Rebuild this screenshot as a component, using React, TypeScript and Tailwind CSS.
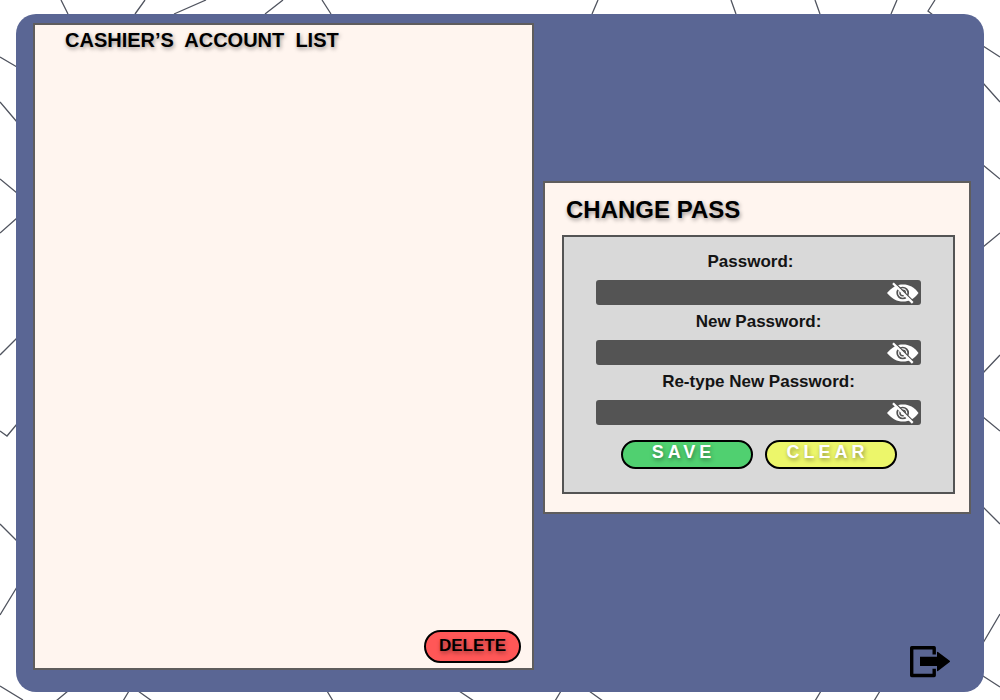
import { useState, type FormEvent } from "react";

const BACKDROP_LINES = [
  "M61 0 68 14M145 0 135 14M206 0 174 14M283 0 265 14M322 0 331 14",
  "M598 0 592 14M731 0 736 14M815 0 820 14M897 0 891 14M935 0 928 11 933 15",
  "M0 57 17 67M0 102 17 122M0 179 17 193M0 233 17 218M0 355 17 338",
  "M0 431 7 436 17 424M0 524 17 541M0 615 17 587M0 686 23 700",
  "M983 46 1000 57M983 83 1000 102M983 165 1000 179M983 247 1000 233M983 373 1000 355",
  "M983 417 1000 431M983 507 1000 524M983 643 1000 614M983 676 1000 687",
  "M68 691 56 701M129 691 123 701M138 691 152 701M327 691 333 701M459 691 474 701",
  "M561 691 555 701M589 691 603 701M821 691 815 701M880 691 874 701",
].join("");

function Backdrop() {
  return (
    <svg
      className="absolute inset-0 h-full w-full"
      viewBox="0 0 1000 700"
      preserveAspectRatio="none"
      aria-hidden="true"
    >
      <path d={BACKDROP_LINES} fill="none" stroke="#50545f" strokeWidth="1.3" />
    </svg>
  );
}

function EyeOffIcon() {
  return (
    <svg width="32" height="22" viewBox="0 0 32 22" fill="none" aria-hidden="true">
      <path d="M0 11C5 5 10 2.400 16 2.400S27.500 5 31.500 11C27.500 17 22 19.600 16 19.600S5 17 0 11Z" fill="#fff" />
      <circle cx="15.700" cy="11" r="5.500" stroke="#545454" strokeWidth="1.700" />
      <circle cx="15.700" cy="11" r="2.700" stroke="#545454" strokeWidth="1.500" />
      <path d="M7.500 .5 27.500 20.500" stroke="#545454" strokeWidth="1.500" />
      <path d="M6 1.200 25.700 20.900" stroke="#fff" strokeWidth="2.300" />
    </svg>
  );
}

function ExitIcon() {
  return (
    <svg width="41" height="32" viewBox="0 0 41 32" fill="none" aria-hidden="true">
      <path d="M24.200 8.500V1.700H1.700V29.500H24.200V22.700" stroke="#000" strokeWidth="3.400" strokeLinejoin="round" />
      <path d="M10 10.700H27V6.400Q27 5.300 28 5.900L39.700 14.700Q40.500 15.400 39.700 16.100L28 24.900Q27 25.500 27 24.500V19.900H10Z" fill="#000" />
    </svg>
  );
}

type PasswordFieldProps = { id: string; label: string; labelPadding?: string };

function PasswordField({ id, label, labelPadding = "" }: PasswordFieldProps) {
  const [visible, setVisible] = useState(false);
  return (
    <div>
      <label
        htmlFor={id}
        className={`block pt-px pb-[3px] text-center text-[17px] leading-[31px] font-bold text-[#141414] ${labelPadding}`}
      >
        {label}
      </label>
      <div className="flex h-[25px] items-center rounded-[3px] bg-[#545454] pr-[2px]">
        <input
          id={id}
          type={visible ? "text" : "password"}
          className="h-full min-w-0 flex-1 bg-transparent px-2 text-white outline-none"
        />
        <button
          type="button"
          aria-label={`Show or hide ${label}`}
          aria-pressed={visible}
          onClick={() => setVisible(!visible)}
        >
          <EyeOffIcon />
        </button>
      </div>
    </div>
  );
}

export default function App() {
  const save = (event: FormEvent) => event.preventDefault();

  return (
    <div className="relative flex min-h-screen bg-white px-4 pt-[14px] pb-2 font-['Liberation_Sans',Arial,sans-serif] text-black">
      <Backdrop />
      <main className="relative grid flex-1 grid-cols-[501fr_428fr] gap-[9px] rounded-[20px] bg-[#5a6694] pt-[9px] pr-[13px] pl-[17px]">
        <section className="mb-[22px] flex flex-col border-2 border-[#5f5d5d] bg-[#fff5ef]">
          <h1 className="pt-[3px] pl-[30px] text-[20px] leading-[24px] font-bold whitespace-pre [text-shadow:1px_2px_4px_rgba(0,0,0,0.4)]">
            {"CASHIER’S  ACCOUNT  LIST"}
          </h1>
          <button
            type="button"
            className="mt-auto mr-[11px] mb-[5px] h-[33px] w-[97px] self-end rounded-full border-2 border-black bg-[#ff5757] pb-[2px] text-[17px] leading-none font-bold [text-shadow:1px_2px_4px_rgba(0,0,0,0.4)]"
          >
            DELETE
          </button>
        </section>

        <div className="flex flex-col">
          <section className="mt-[158px] border-2 border-[#5f5d5d] bg-[#fff5ef] pr-[14px] pb-[18px] pl-[17px]">
            <h2 className="pt-[13px] pb-[11px] pl-1 text-[24px] leading-[28px] font-bold [text-shadow:1px_2px_4px_rgba(0,0,0,0.4)]">
              CHANGE PASS
            </h2>
            <form onSubmit={save} className="border-2 border-[#545454] bg-[#d9d9d9] px-8 pt-2 pb-[23px]">
              <PasswordField id="current-password" label="Password:" labelPadding="pr-4" />
              <PasswordField id="new-password" label="New Password:" />
              <PasswordField id="retype-password" label="Re-type New Password:" />
              <div className="mt-[15px] flex justify-center gap-3 text-[18px] leading-none font-bold text-white">
                <button
                  type="submit"
                  className="h-[29px] w-[132px] rounded-full border-2 border-black bg-[#50d070] pr-[6px] pb-[6px] tracking-[4px] [text-shadow:1px_2px_4px_rgba(0,0,0,0.4)]"
                >
                  SAVE
                </button>
                <button
                  type="reset"
                  className="h-[29px] w-[132px] rounded-full border-2 border-black bg-[#ecf66a] pr-[6px] pb-[6px] tracking-[4px] [text-shadow:1px_2px_4px_rgba(0,0,0,0.4)]"
                >
                  CLEAR
                </button>
              </div>
            </form>
          </section>
          <button type="button" aria-label="Exit" className="mt-auto mr-[20px] mb-[14px] self-end">
            <ExitIcon />
          </button>
        </div>
      </main>
    </div>
  );
}
